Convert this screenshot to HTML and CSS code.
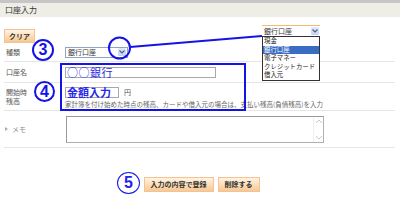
FILE: index.html
```html
<!DOCTYPE html>
<html lang="ja">
<head>
<meta charset="utf-8">
<link rel="stylesheet" href="styles.css">
</head>
<body>
<div class="page">
  <div class="header">口座入力</div>
  <div class="toolbar"><button class="btn clear">クリア</button></div>
  <div class="form">
    <div class="row row-type">
      <div class="label">種類</div>
      <div class="field">
        <div class="select">
          <span class="sel-text">銀行口座</span>
          <span class="sel-arrow"><svg width="6" height="4" viewBox="0 0 6 4"><path d="M0.5 0.5 L3 3 L5.5 0.5" fill="none" stroke="#4d6185" stroke-width="1.2"/></svg></span>
        </div>
      </div>
    </div>
    <div class="row row-name">
      <div class="label">口座名</div>
      <div class="field"><div class="input input-name">○○銀行</div></div>
    </div>
    <div class="row row-balance">
      <div class="label">開始時<br>残高</div>
      <div class="field">
        <div class="amount-line"><div class="input input-amount">金額入力</div><span class="yen">円</span></div>
        <div class="help">家計簿を付け始めた時点の残高、カードや借入元の場合は、支払い残高(負債残高)を入力</div>
      </div>
    </div>
    <div class="row row-memo">
      <div class="label memo-label"><span class="tri"></span>メモ</div>
      <div class="field">
        <div class="textarea">
          <div class="scroll">
            <svg width="8" height="5" viewBox="0 0 8 5"><path d="M1 4 L4 1 L7 4" fill="none" stroke="#c8c8c8" stroke-width="1"/></svg>
            <svg width="8" height="5" viewBox="0 0 8 5"><path d="M1 1 L4 4 L7 1" fill="none" stroke="#c8c8c8" stroke-width="1"/></svg>
          </div>
        </div>
      </div>
    </div>
  </div>
  <div class="actions">
    <button class="btn">入力の内容で登録</button>
    <button class="btn">削除する</button>
  </div>

  <!-- annotation overlays -->
  <div class="dropdown">
    <div class="dd-select">
      <span class="sel-text">銀行口座</span>
      <span class="sel-arrow"><svg width="6" height="4" viewBox="0 0 6 4"><path d="M0.5 0.5 L3 3 L5.5 0.5" fill="none" stroke="#4d6185" stroke-width="1.2"/></svg></span>
    </div>
    <ul class="dd-list">
      <li>現金</li>
      <li class="selected">銀行口座</li>
      <li>電子マネー</li>
      <li>クレジットカード</li>
      <li>借入元</li>
    </ul>
  </div>
  <div class="highlight-box"></div>
  <svg class="callout" width="400" height="212" viewBox="0 0 400 212">
    <circle cx="119.5" cy="48" r="10.5" fill="none" stroke="#1414e6" stroke-width="2"/>
    <line x1="130" y1="47" x2="262" y2="36" stroke="#1414e6" stroke-width="2"/>
  </svg>
  <div class="num num3">3</div>
  <div class="num num4">4</div>
  <div class="num num5">5</div>
</div>
</body>
</html>
```
FILE: styles.css
```css
html, body {
  margin: 0;
  padding: 0;
  background: #ffffff;
}
body {
  font-family: "Noto Sans CJK JP", "Noto Sans", sans-serif;
  color: #333;
}
.page {
  position: relative;
  width: 400px;
  height: 212px;
  overflow: hidden;
}
.header {
  border-top: 3px solid #c6c6c6;
  background: #eeede6;
  height: 14px;
  line-height: 14px;
  font-size: 8px;
  padding-left: 5px;
  color: #333;
}
.toolbar {
  display: flex;
  align-items: flex-start;
  padding: 12px 0 0 4px;
  height: 14px;
}
.btn {
  font-family: "Noto Sans CJK JP", sans-serif;
  font-size: 7px;
  font-weight: 700;
  color: #333;
  height: 15px;
  padding: 0 6px;
  margin: 0;
  border: 1px solid #f3c393;
  background: linear-gradient(#fff4e6, #fbd9ae 60%, #f7c896);
  line-height: 13px;
  cursor: pointer;
  display: block;
}
.clear {
  width: 31px;
  height: 14px;
  padding: 0;
  line-height: 12px;
}
.form {
  margin: 0 5px 0 4px;
}
.row {
  display: grid;
  grid-template-columns: 61px 1fr;
  align-items: center;
  border-bottom: 1px solid #e6e6e6;
}
.label {
  font-size: 7px;
  line-height: 9px;
  padding-left: 2px;
  color: #555;
}
.row-type { height: 18px; }
.row-name { height: 20px; }
.row-balance { height: 27px; }
.row-memo { height: 36px; }

.select {
  width: 58px;
  height: 9px;
  border: 1px solid #8ea4c4;
  display: flex;
  align-items: center;
  justify-content: space-between;
  background: #fff;
  padding: 0 1px 0 2px;
}
.sel-text {
  font-size: 7px;
  line-height: 9px;
  color: #333;
}
.sel-arrow {
  width: 8px;
  height: 8px;
  background: linear-gradient(#e3ebfb, #c2d3f3);
  border-radius: 1px;
  display: flex;
  align-items: center;
  justify-content: center;
}
.input {
  border: 1px solid #a8a8a8;
  background: #fff;
  height: 9px;
  overflow: visible;
  white-space: nowrap;
  color: #2a2ae8;
}
.input-name {
  width: 148px;
  font-size: 11px;
  line-height: 9px;
  padding-left: 1px;
  letter-spacing: 0.5px;
}
.amount-line {
  display: flex;
  align-items: center;
  gap: 5px;
  margin-top: 1px;
}
.input-amount {
  width: 51px;
  font-size: 11px;
  font-weight: 700;
  line-height: 9px;
  padding-left: 1px;
}
.yen {
  font-size: 7px;
  line-height: 9px;
  color: #555;
}
.help {
  font-size: 6.5px;
  line-height: 8px;
  color: #666;
  white-space: nowrap;
  margin-top: 2px;
}
.memo-label {
  display: flex;
  align-items: center;
  gap: 4px;
  padding-left: 1px;
  color: #888;
}
.tri {
  width: 0;
  height: 0;
  border-left: 3px solid #b8a898;
  border-top: 2.5px solid transparent;
  border-bottom: 2.5px solid transparent;
}
.textarea {
  width: 256px;
  height: 25px;
  border: 1px solid #b0b0b0;
  border-top-color: #9a9a9a;
  border-left-color: #9a9a9a;
  background: #fff;
  position: relative;
  margin-left: 1px;
}
.scroll {
  position: absolute;
  right: 0;
  top: 0;
  bottom: 0;
  width: 9px;
  border-left: 1px solid #f0f0f0;
  display: flex;
  flex-direction: column;
  justify-content: space-between;
  align-items: center;
  padding: 2px 0;
}
.actions {
  display: flex;
  justify-content: center;
  gap: 4px;
  margin-top: 29px;
  padding-left: 3px;
}
.actions .btn {
  height: 15px;
}

/* annotation overlays */
.dropdown {
  position: absolute;
  left: 262px;
  top: 25px;
  width: 58px;
}
.dd-select {
  border-top: 1px solid #f5b976;
  height: 10px;
  display: flex;
  align-items: center;
  justify-content: space-between;
  padding: 0 1px 0 2px;
  background: #fff;
}
.dd-list {
  list-style: none;
  margin: 0;
  padding: 0;
  border: 1px solid #333;
  background: #fff;
  overflow: hidden;
}
.dd-list li {
  font-size: 6.4px;
  line-height: 8.6px;
  height: 8.6px;
  padding-left: 1px;
  color: #222;
  white-space: nowrap;
  overflow: hidden;
}
.dd-list li.selected {
  background: #3a6cc4;
  color: #fff;
}
.highlight-box {
  position: absolute;
  left: 60px;
  top: 63px;
  width: 182px;
  height: 44px;
  border: 2px solid #1414e6;
}
.callout {
  position: absolute;
  left: 0;
  top: 0;
  pointer-events: none;
}
.num {
  position: absolute;
  border: 2px solid #1414e6;
  border-radius: 50%;
  color: #1414e6;
  font-family: "Liberation Sans", Arial, sans-serif;
  font-weight: 700;
  font-size: 16px;
  display: flex;
  align-items: center;
  justify-content: center;
  background: #fff;
  box-sizing: border-box;
}
.num3 { left: 32px; top: 39px; width: 22px; height: 22px; }
.num4 { left: 34px; top: 81px; width: 21px; height: 21px; }
.num5 { left: 117px; top: 172px; width: 23px; height: 22px; border-width: 1.5px; color: #2222ee; }
```
